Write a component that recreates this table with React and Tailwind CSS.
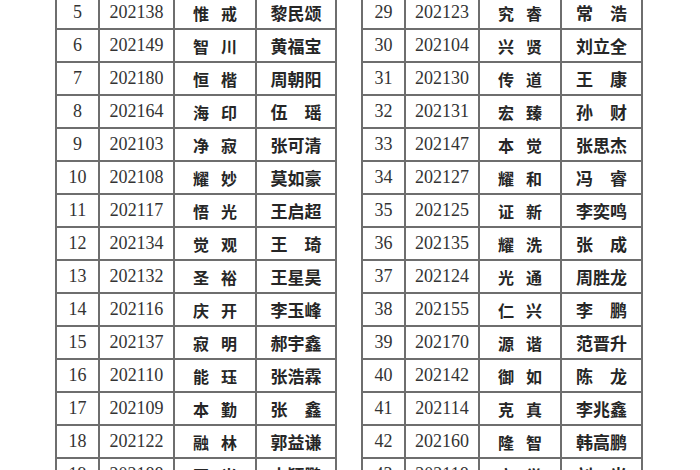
import React from 'react';

const leftRows = [
  ['5', '202138', '惟戒', '黎民颂'],
  ['6', '202149', '智川', '黄福宝'],
  ['7', '202180', '恒楷', '周朝阳'],
  ['8', '202164', '海印', '伍瑶'],
  ['9', '202103', '净寂', '张可清'],
  ['10', '202108', '耀妙', '莫如豪'],
  ['11', '202117', '悟光', '王启超'],
  ['12', '202134', '觉观', '王琦'],
  ['13', '202132', '圣裕', '王星昊'],
  ['14', '202116', '庆开', '李玉峰'],
  ['15', '202137', '寂明', '郝宇鑫'],
  ['16', '202110', '能珏', '张浩霖'],
  ['17', '202109', '本勤', '张鑫'],
  ['18', '202122', '融林', '郭益谦'],
  ['19', '202188', '冠光', '史颖鹏'],
];

const rightRows = [
  ['29', '202123', '究睿', '常浩'],
  ['30', '202104', '兴贤', '刘立全'],
  ['31', '202130', '传道', '王康'],
  ['32', '202131', '宏臻', '孙财'],
  ['33', '202147', '本觉', '张思杰'],
  ['34', '202127', '耀和', '冯睿'],
  ['35', '202125', '证新', '李奕鸣'],
  ['36', '202135', '耀洗', '张成'],
  ['37', '202124', '光通', '周胜龙'],
  ['38', '202155', '仁兴', '李鹏'],
  ['39', '202170', '源谐', '范晋升'],
  ['40', '202142', '御如', '陈龙'],
  ['41', '202114', '克真', '李兆鑫'],
  ['42', '202160', '隆智', '韩高鹏'],
  ['43', '202118', '宗觉', '刘光'],
];

const serif = { fontFamily: '"Liberation Serif", serif' };

// two-char names get a full-width gap so they line up with three-char ones
const padName = (name) => (name.length === 2 ? name[0] + '\u3000' + name[1] : name);

const RosterTable = ({ rows, widths }) => (
  <div className="flex flex-col border-l-2 border-[#6e6e6e]">
    {rows.map((r) => (
      <div key={r[0]} className="flex h-[33px] border-b-2 border-[#6e6e6e]">
        <div
          className={`${widths[0]} flex items-center justify-center border-r-2 border-[#6e6e6e] text-[18px] text-[#333]`}
          style={serif}
        >
          {r[0]}
        </div>
        <div
          className={`${widths[1]} flex items-center justify-center border-r-2 border-[#6e6e6e] text-[18px] text-[#333]`}
          style={serif}
        >
          {r[1]}
        </div>
        <div
          className={`${widths[2]} flex items-center justify-center gap-[12px] border-r-2 border-[#6e6e6e] font-['Noto_Sans_CJK_SC',sans-serif] text-[16px] font-bold text-[#262626]`}
        >
          <span>{r[2][0]}</span>
          <span>{r[2][1]}</span>
        </div>
        <div
          className={`${widths[3]} flex items-center justify-center border-r-2 border-[#6e6e6e] font-['Noto_Sans_CJK_SC',sans-serif] text-[17px] font-bold text-[#262626]`}
        >
          {padName(r[3])}
        </div>
      </div>
    ))}
  </div>
);

export default function App() {
  return (
    <div className="h-[470px] w-[700px] overflow-hidden bg-white">
      <div className="mt-[-3px] flex">
        <div className="ml-[55px]">
          <RosterTable rows={leftRows} widths={['w-[43px]', 'w-[75px]', 'w-[82px]', 'w-[80px]']} />
        </div>
        <div className="ml-[24px]">
          <RosterTable rows={rightRows} widths={['w-[43px]', 'w-[74px]', 'w-[82px]', 'w-[81px]']} />
        </div>
      </div>
    </div>
  );
}
